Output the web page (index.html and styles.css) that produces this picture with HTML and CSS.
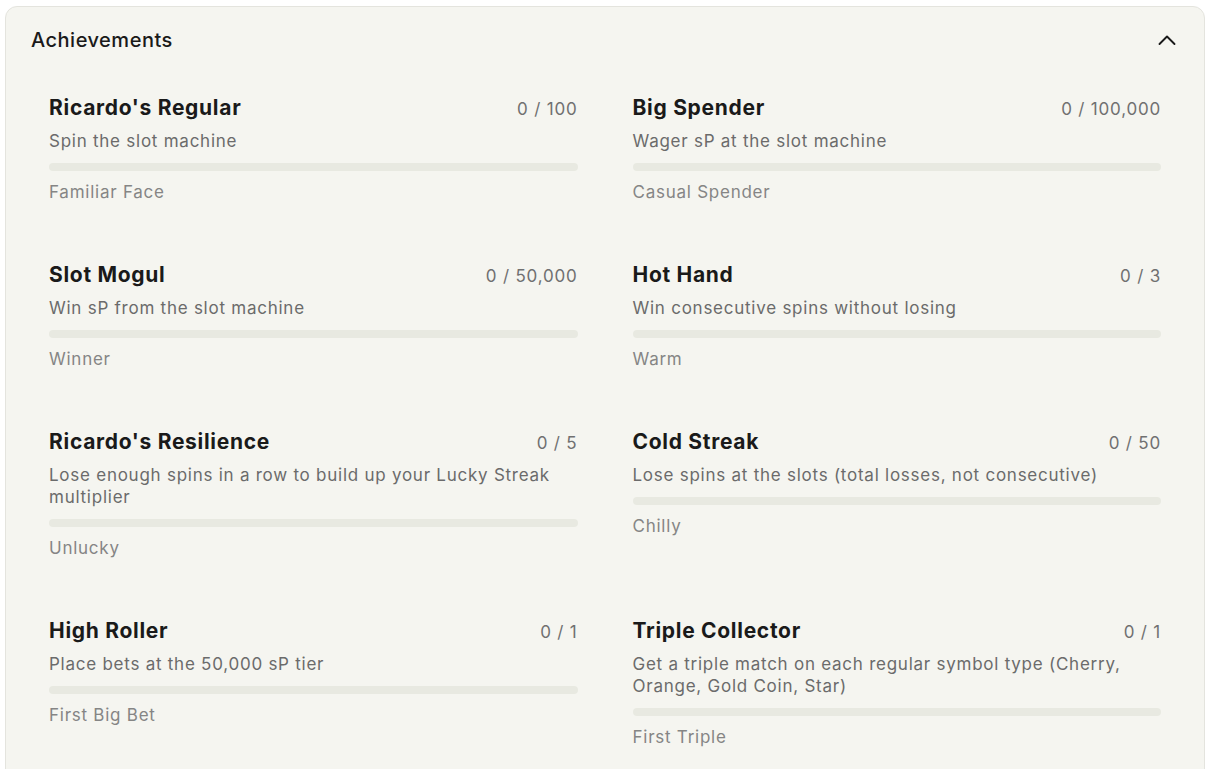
FILE: index.html
```html
<!DOCTYPE html>
<html>
<head>
<meta charset="utf-8">
<link rel="stylesheet" href="styles.css">
</head>
<body>
<section class="card">
  <header class="card-header">
    <h2 class="card-title">Achievements</h2>
    <svg class="chevron" width="20" height="20" viewBox="0 0 20 20" fill="none"><path d="M2.5 14 L10 6.5 L17.5 14" stroke="#1a1a1a" stroke-width="1.9" stroke-linecap="round" stroke-linejoin="round"/></svg>
  </header>
  <div class="grid">
    <div class="item">
      <div class="item-top"><span class="item-title">Ricardo's Regular</span><span class="item-count">0 / 100</span></div>
      <p class="item-desc">Spin the slot machine</p>
      <div class="bar"><div class="fill" style="width:0%"></div></div>
      <p class="item-tier">Familiar Face</p>
    </div>
    <div class="item">
      <div class="item-top"><span class="item-title">Big Spender</span><span class="item-count">0 / 100,000</span></div>
      <p class="item-desc">Wager sP at the slot machine</p>
      <div class="bar"><div class="fill" style="width:0%"></div></div>
      <p class="item-tier">Casual Spender</p>
    </div>
    <div class="item">
      <div class="item-top"><span class="item-title">Slot Mogul</span><span class="item-count">0 / 50,000</span></div>
      <p class="item-desc">Win sP from the slot machine</p>
      <div class="bar"><div class="fill" style="width:0%"></div></div>
      <p class="item-tier">Winner</p>
    </div>
    <div class="item">
      <div class="item-top"><span class="item-title">Hot Hand</span><span class="item-count">0 / 3</span></div>
      <p class="item-desc">Win consecutive spins without losing</p>
      <div class="bar"><div class="fill" style="width:0%"></div></div>
      <p class="item-tier">Warm</p>
    </div>
    <div class="item">
      <div class="item-top"><span class="item-title">Ricardo's Resilience</span><span class="item-count">0 / 5</span></div>
      <p class="item-desc">Lose enough spins in a row to build up your Lucky Streak multiplier</p>
      <div class="bar"><div class="fill" style="width:0%"></div></div>
      <p class="item-tier">Unlucky</p>
    </div>
    <div class="item">
      <div class="item-top"><span class="item-title">Cold Streak</span><span class="item-count">0 / 50</span></div>
      <p class="item-desc">Lose spins at the slots (total losses, not consecutive)</p>
      <div class="bar"><div class="fill" style="width:0%"></div></div>
      <p class="item-tier">Chilly</p>
    </div>
    <div class="item">
      <div class="item-top"><span class="item-title">High Roller</span><span class="item-count">0 / 1</span></div>
      <p class="item-desc">Place bets at the 50,000 sP tier</p>
      <div class="bar"><div class="fill" style="width:0%"></div></div>
      <p class="item-tier">First Big Bet</p>
    </div>
    <div class="item">
      <div class="item-top"><span class="item-title">Triple Collector</span><span class="item-count">0 / 1</span></div>
      <p class="item-desc">Get a triple match on each regular symbol type (Cherry, Orange, Gold Coin, Star)</p>
      <div class="bar"><div class="fill" style="width:0%"></div></div>
      <p class="item-tier">First Triple</p>
    </div>
  </div>
</section>
</body>
</html>
```

FILE: styles.css
```css
* { box-sizing: border-box; }
html, body { margin: 0; padding: 0; background: #ffffff; }
body {
  font-family: Inter, "Noto Sans", "Liberation Sans", sans-serif;
  color: #1a1a1a;
  padding: 6px 16px 0 5px;
}
.card {
  width: 1200px;
  background: #f5f5f0;
  border: 1px solid #e4e4de;
  border-radius: 12px;
  padding-bottom: 40px;
}
.card-header {
  display: flex;
  align-items: center;
  justify-content: space-between;
  padding: 21px 27px 21px 25px;
}
.card-title {
  margin: 0;
  font-size: 20px;
  line-height: 24px;
  font-weight: 500;
  letter-spacing: 0.5px;
}
.chevron { display: block; }
.grid {
  display: grid;
  grid-template-columns: 1fr 1fr;
  column-gap: 55px;
  row-gap: 60px;
  padding: 23px 43px 0 43px;
  align-items: start;
}
.item-top {
  display: flex;
  justify-content: space-between;
  align-items: baseline;
}
.item-title {
  font-size: 21px;
  line-height: 24px;
  font-weight: 700;
  color: #1a1a1a;
  letter-spacing: 0.7px;
}
.item-count {
  font-size: 17px;
  line-height: 22px;
  color: #707070;
  letter-spacing: 0.8px;
}
.item-desc {
  margin: 10px 0 0;
  font-size: 17px;
  line-height: 22px;
  color: #6b6b6b;
  letter-spacing: 0.75px;
}
.bar {
  margin-top: 11px;
  height: 8px;
  border-radius: 4px;
  background: #e8e9e1;
  overflow: hidden;
}
.fill { height: 100%; background: #1a1a1a; }
.item-tier {
  margin: 10px 0 0;
  font-size: 17px;
  line-height: 22px;
  color: #858585;
  letter-spacing: 0.75px;
}
```
